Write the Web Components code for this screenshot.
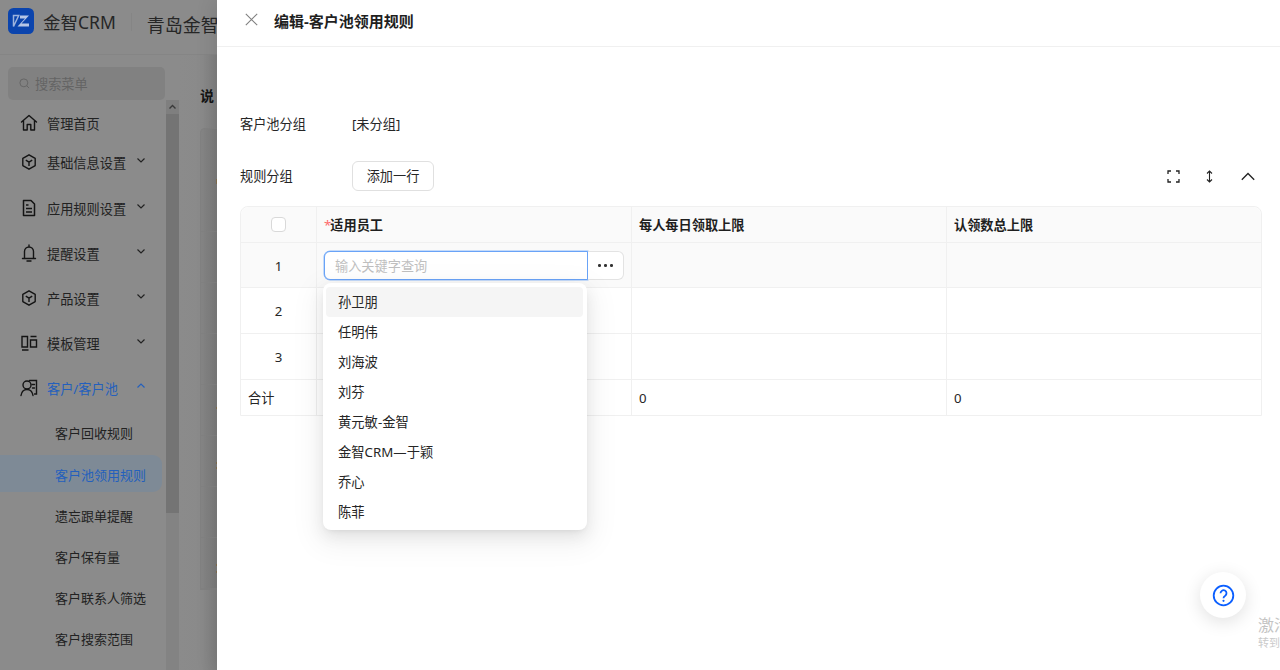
<!DOCTYPE html>
<html lang="zh"><head><meta charset="utf-8">
<style>
html,body{margin:0;padding:0;width:1280px;height:670px;overflow:hidden;background:#8b8b8b;font-family:"Noto Sans","Noto Sans CJK SC",sans-serif;}
body{display:flex;position:relative}
</style></head><body>
<app-backdrop></app-backdrop>
<edit-drawer></edit-drawer>
<help-fab></help-fab>
<script>
const ICONS={
home:'<path d="M2.500 9 10 2.500 17.500 9M4.500 7.500V17h3.700v-5.500h3.600V17h3.700V7.500" fill="none" stroke="currentColor" stroke-width="1.400" stroke-linejoin="round" stroke-linecap="round"/>',
cube:'<path d="M10 2.800 16.200 6.400v7.200L10 17.200l-6.200-3.600V6.400zM6.800 8.200 10 10.200l3.200-2M10 10.200V14" fill="none" stroke="currentColor" stroke-width="1.400" stroke-linejoin="round"/>',
doc:'<path d="M4.500 2.500h7.500l3.500 3.500v11.500h-11zM7 10.500h6M7 14h6M7 7h2.500" fill="none" stroke="currentColor" stroke-width="1.500" stroke-linejoin="round"/>',
bell:'<path d="M3.500 15.500h13M5.500 15.500V8.500a4.500 4.500 0 0 1 9 0v7M8 18h4M10 2v2" fill="none" stroke="currentColor" stroke-width="1.400" stroke-linecap="round"/>',
tpl:'<path d="M3 3.500h5.500v10.500H3zM3 17h6.500M11.500 3.500h6M11.500 7h6v7h-6z" fill="none" stroke="currentColor" stroke-width="1.400"/>',
user:'<circle cx="8" cy="7" r="4" fill="none" stroke="currentColor" stroke-width="1.400"/><path d="M2 17.500c.600-3.800 3-6 6-6s5.400 2.200 6 6M10.500 2.500h7v13.500h-2M13 6.500h2.500M13.500 10h2" fill="none" stroke="currentColor" stroke-width="1.400" stroke-linecap="round"/>'
};
const def=(name,css,html)=>customElements.define(name,class extends HTMLElement{
  connectedCallback(){ if(this.shadowRoot) return; const r=this.attachShadow({mode:'open'}); r.innerHTML='<style>'+css+'</style>'+(typeof html==='function'?html(this):html);}
});

def('nav-item',`
:host{display:flex;align-items:center;height:45px;padding:0 20px 0 19px;color:#222;font-size:13.2px;box-sizing:border-box;width:166px;white-space:nowrap}
:host([h1]){height:32px}
:host([h2]){height:47px}
svg.i{width:20px;height:20px;flex:none;margin-right:8px;color:#141414;margin-top:-1px}
.c{margin-left:auto;width:10px;height:10px;flex:none;margin-top:-5px}
:host([open]){color:#2460bd}
`,h=>`<svg class="i" viewBox="0 0 20 20">${ICONS[h.getAttribute('icon')]}</svg><span><slot></slot></span>`+
 (h.hasAttribute('chev')?`<svg class="c" viewBox="0 0 10 10"><path d="${h.hasAttribute('open')?'M1.500 6.500 5 3l3.500 3.500':'M1.500 3.500 5 7l3.500-3.500'}" fill="none" stroke="currentColor" stroke-width="1.200"/></svg>`:''));

def('nav-sub',`
:host{display:flex;align-items:center;height:37px;margin-bottom:4px;padding:2px 0 0 55px;font-size:13px;color:#222;width:162px;box-sizing:border-box;border-radius:0 9px 9px 0;white-space:nowrap}
:host([first]){margin-top:-1px;margin-bottom:5px}
:host([active]){background:#7e8a96;color:#2460bd}
`,'<slot></slot>');

def('app-backdrop',`
:host{display:flex;flex-direction:column;width:217px;height:670px;flex:none;background:#8b8b8b;overflow:hidden;position:relative}
.brand{display:flex;align-items:center;height:55px;flex:none;border-bottom:1px solid #858585;padding-left:8px;box-sizing:border-box;white-space:nowrap}
.logo{width:26px;height:26px;flex:none;margin-top:-12px}
.bn{font-size:17.500px;color:#262626;margin-left:9px;margin-top:-12px}
.sep{width:1px;height:18px;background:#858585;margin:-10px 15px 0 15px;flex:none}
.co{font-size:18px;color:#262626;margin-top:-6px}
.main{display:flex;flex:1;min-height:0}
.side{width:166px;flex:none;padding-top:12px;box-sizing:border-box;overflow:hidden}
.search{display:flex;align-items:center;margin-left:8px;width:157px;height:33px;background:#818181;border-radius:5px;color:#646464;font-size:13.200px;box-sizing:border-box;padding-left:11px;gap:5px}
.search svg{width:11px;height:11px;flex:none}
.list{margin-top:7px}
.gap{height:3px}
.bar{width:13px;flex:none;margin-top:45px;background:#838383;display:flex;flex-direction:column}
.up{height:14px;background:#7f7f7f;flex:none}
.up svg{display:block;width:13px;height:14px}
.thumb{height:399px;background:#747474;flex:none}
.cnt{flex:1;padding:30px 0 0 21px;min-width:0;position:relative;background:linear-gradient(90deg,#8b8b8b 0,#8a8a8a 60%,#808080 100%)}
.cnt b{font-size:14px;line-height:22px;color:#141414;display:block;white-space:nowrap}
.card{position:absolute;left:21px;top:73px;right:0;height:462px;background:rgba(0,0,0,.03);border-radius:5px 0 0 0;border:1px solid #828282;border-right:0;box-sizing:border-box;display:flex;flex-direction:column}
.card .top{height:103px;flex:none;border-bottom:1px solid #828282;box-sizing:border-box}
.card .r{flex:1;border-bottom:1px solid #828282}
.card .r:last-child{border-bottom:0}
.t{position:absolute;right:0;width:1.500px;height:1.500px;background:#84704f}
`,`
<div class="brand">
 <svg class="logo" viewBox="0 0 26 26"><rect width="26" height="26" rx="5.500" fill="#0b44ad"/><path d="M5.500 7.500h5.200L5.500 18.500zM5.500 18.500" fill="none" stroke="#9db3dd" stroke-width="1.500"/><path d="M12 7.500h9L13.500 15.500h7.500v3H9.500L17 10.500h-5z" fill="#b6c6e6"/></svg>
 <span class="bn">金智CRM</span><span class="sep"></span><span class="co">青岛金智</span>
</div>
<div class="main">
 <div class="side">
  <div class="search"><svg viewBox="0 0 12 12"><circle cx="5.300" cy="5.300" r="4.300" fill="none" stroke="#646464" stroke-width="1"/><path d="m8.500 8.500 2.500 2.500" stroke="#646464"/></svg><span>搜索菜单</span></div>
  <div class="list">
   <nav-item icon="home" h1>管理首页</nav-item>
   <nav-item icon="cube" chev h2>基础信息设置</nav-item>
   <nav-item icon="doc" chev>应用规则设置</nav-item>
   <nav-item icon="bell" chev>提醒设置</nav-item>
   <nav-item icon="cube" chev>产品设置</nav-item>
   <nav-item icon="tpl" chev>模板管理</nav-item>
   <nav-item icon="user" chev open>客户/客户池</nav-item>
   <div class="gap"></div>
   <nav-sub first>客户回收规则</nav-sub>
   <nav-sub active>客户池领用规则</nav-sub>
   <nav-sub>遗忘跟单提醒</nav-sub>
   <nav-sub>客户保有量</nav-sub>
   <nav-sub>客户联系人筛选</nav-sub>
   <nav-sub>客户搜索范围</nav-sub>
  </div>
 </div>
 <div class="bar"><div class="up"><svg viewBox="0 0 13 14"><path d="M3.500 8.500 6.500 5.500l3 3" fill="none" stroke="#3a3a3a" stroke-width="1.400"/></svg></div><div class="thumb"></div></div>
 <div class="cnt"><b>说</b><div class="card"><div class="top"></div><div class="r"></div><div class="r"></div><div class="r"></div><div class="r"></div><div class="r"></div><div class="r"></div><div class="r"></div>
  <i class="t" style="top:50px;height:5px"></i><i class="t" style="top:278px"></i><i class="t" style="top:333px"></i><i class="t" style="top:338px"></i><i class="t" style="top:435px"></i><i class="t" style="top:442px"></i></div></div>
</div>`);

def('drawer-header',`
:host{display:flex;align-items:center;height:47px;box-sizing:border-box;border-bottom:1px solid #f0f0f0;padding:0 0 4px 28px;flex:none}
svg{width:13px;height:13px;margin-right:16px;margin-top:-3px;flex:none}
.t{font-size:15px;font-weight:700;color:#1f1f1f;line-height:20px;margin-top:-1px}
`,`<svg viewBox="0 0 13 13"><path d="M.8.8l11.400 11.400M12.200.8.8 12.200" stroke="#808080" stroke-width="1.100" fill="none"/></svg><span class="t"><slot></slot></span>`);

def('rule-table',`
:host{display:block;margin:0 18px 0 23px;font-size:13.200px;color:#262626;position:relative}
.g{display:grid;grid-template-columns:76px 315px 315px 1fr;grid-template-rows:36px 45px 46px 46px 35px;border:1px solid #f0f0f0;border-top-left-radius:8px;border-top-right-radius:8px;box-sizing:border-box;height:210px}
.g>div{border-right:1px solid #f0f0f0;border-bottom:1px solid #f0f0f0;display:flex;align-items:center;box-sizing:border-box;min-width:0}
.g>div:nth-child(4n){border-right:0}
.g>div:nth-last-child(-n+4){border-bottom:0}
.h{background:#fafafa;font-weight:700;padding-left:7px;color:#1f1f1f}
.h.f{padding-left:0;justify-content:center;border-top-left-radius:8px}
.h.l{border-top-right-radius:8px}
.h i{color:#ff6b6d;font-style:normal;font-weight:400;letter-spacing:-1px}
.cb{width:15px;height:15px;border:1px solid #d9d9d9;border-radius:4px;background:#fff;box-sizing:border-box}
.n{justify-content:center}
.n.sel{padding-top:1px}
.sel{background:#fafafa}
.sum{padding-left:7px}
.edit{padding:1px 0 0 7px}
.inp{width:264px;height:29px;border:1px solid #69a3f7;border-radius:6px 0 0 6px;box-sizing:border-box;color:#bfbfbf;padding-left:10px;display:flex;align-items:center;background:#fff;box-shadow:0 0 0 .5px #8fbcfa;flex:none}
.more{width:36px;height:29px;border:1px solid #e3e3e3;border-left:0;border-radius:0 6px 6px 0;box-sizing:border-box;display:flex;align-items:center;justify-content:center;gap:3.500px;background:#fff;flex:none}
.more u{width:2.500px;height:2.500px;border-radius:50%;background:#333;display:block}
`,`<div class="g">
<div class="h f"><span class="cb"></span></div><div class="h"><i>*</i>适用员工</div><div class="h">每人每日领取上限</div><div class="h l">认领数总上限</div>
<div class="n sel">1</div><div class="edit sel"><span class="inp">输入关键字查询</span><span class="more"><u></u><u></u><u></u></span></div><div class="sel"></div><div class="sel"></div>
<div class="n">2</div><div></div><div></div><div></div>
<div class="n">3</div><div></div><div></div><div></div>
<div class="sum">合计</div><div></div><div class="sum">0</div><div class="sum">0</div>
</div><slot></slot>`);

def('staff-menu',`
:host{position:absolute;left:83px;top:77px;width:264px;height:247px;background:#fff;border-radius:8px;box-shadow:0 6px 16px rgba(0,0,0,.08),0 3px 6px -4px rgba(0,0,0,.12),0 9px 28px 8px rgba(0,0,0,.05);padding:4px 4px 0 3px;box-sizing:border-box;font-size:13.300px;color:#262626}
div{height:30px;box-sizing:border-box;padding:0 0 2px 12px;display:flex;align-items:center;border-radius:4px}
.a{background:#f5f5f5}
`,`<div class="a">孙卫朋</div><div>任明伟</div><div>刘海波</div><div>刘芬</div><div>黄元敏-金智</div><div>金智CRM—于颖</div><div>乔心</div><div>陈菲</div>`);

def('edit-drawer',`
:host{display:flex;flex-direction:column;flex:1;height:670px;background:#fff;min-width:0;color:#262626;font-size:13.200px;box-shadow:-6px 0 16px rgba(0,0,0,.08);z-index:1}
.row{display:flex;align-items:center;padding-left:23px}
.lb{width:112px;flex:none}
.r1{margin-top:61px;height:30px}
.r2{margin-top:23px;height:30px;margin-bottom:15px}
.r2 .lb{padding-bottom:2px}
.btn{width:82px;height:30px;border:1px solid #e0e0e0;border-radius:6px;display:flex;align-items:center;justify-content:center;box-sizing:border-box;background:#fff;padding-bottom:1px}
.tools{margin-left:auto;display:flex;align-items:center;margin-right:25px;gap:27px}
.tools svg{display:block}
.tools .ud{margin:0 1px 0 -1px}
`,`<drawer-header>编辑-客户池领用规则</drawer-header>
<div class="row r1"><span class="lb">客户池分组</span><span>[未分组]</span></div>
<div class="row r2"><span class="lb">规则分组</span><span class="btn">添加一行</span>
 <span class="tools">
  <svg width="13" height="13" viewBox="0 0 13 13"><path d="M1 4V1h3M9 1h3v3M12 9v3H9M4 12H1V9" fill="none" stroke="#222" stroke-width="1.300"/></svg>
  <svg class="ud" width="7" height="13" viewBox="0 0 7 13"><path d="M3.500 1.500v10M1 3.500l2.500-2.500L6 3.500M1 9.500 3.500 12 6 9.500" fill="none" stroke="#222" stroke-width="1.100"/></svg>
  <svg width="14" height="9" viewBox="0 0 14 9"><path d="M.8 7.800 7 1.500l6.200 6.300" fill="none" stroke="#222" stroke-width="1.300"/></svg>
 </span></div>
<rule-table><staff-menu></staff-menu></rule-table>`);

def('help-fab',`
:host{position:absolute;left:1200px;top:572px;width:46px;height:46px;border-radius:50%;background:#fff;box-shadow:0 4px 18px rgba(0,0,0,.12);display:flex;align-items:center;justify-content:center;z-index:2}
svg{width:23px;height:23px}
.w{position:absolute;left:58px;top:44px;color:#c4c4c4;font-size:16px;white-space:nowrap;width:22px;overflow:hidden;line-height:19px}
.w small{display:block;font-size:11px;line-height:16px;color:#cacaca}
`,`<svg viewBox="0 0 23 23"><circle cx="11.500" cy="11.500" r="9.800" fill="none" stroke="#0b5fff" stroke-width="1.800"/><path d="M8.500 9.200a3 3 0 1 1 4.700 2.500c-1.100.7-1.700 1.200-1.700 2.500" fill="none" stroke="#0b5fff" stroke-width="1.800"/><circle cx="11.500" cy="16.800" r="1.100" fill="#0b5fff"/></svg><div class="w">激活<small>转到设置</small></div>`);
</script>
</body></html>
